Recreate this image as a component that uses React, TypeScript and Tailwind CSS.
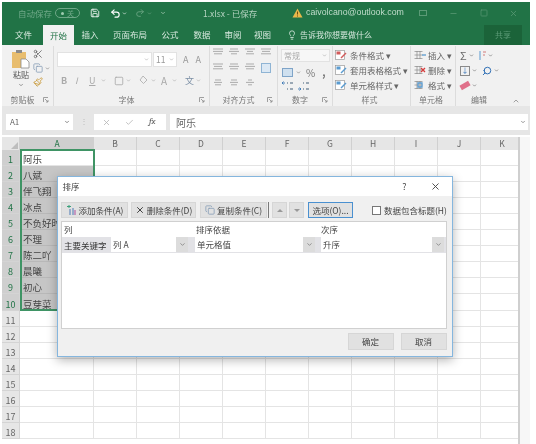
import { ChevronDown, ChevronUp, Check, Lightbulb, Minus, Paintbrush, Scissors, Search, Square, Undo2, Redo2, X, Save, Copy } from 'lucide-react';

const FONT = { fontFamily: '"Noto Sans CJK SC", "Liberation Sans", sans-serif' };

const tabs = [
  { label: '插入', w: 'w-[32px]' },
  { label: '页面布局', w: 'w-[48px]' },
  { label: '公式', w: 'w-[32px]' },
  { label: '数据', w: 'w-[32px]' },
  { label: '审阅', w: 'w-[30px]' },
  { label: '视图', w: 'w-[29px]' },
];

const names = ['阿乐', '八斌', '伴飞翔', '冰点', '不负好时', '不理', '陈二吖', '晨曦', '初心', '豆芽菜'];
const cols = ['B', 'C', 'D', 'E', 'F', 'G', 'H', 'I', 'J', 'K'];
const rows = Array.from({ length: 18 }, (_, i) => i + 1);

function Launcher() {
  return (
    <svg width="6" height="6" viewBox="0 0 6 6" className="shrink-0">
      <path d="M0.5 5V0.5H5M2 2l3 3M5 3v2H3" fill="none" stroke="#8a8a8a" strokeWidth="0.8" />
    </svg>
  );
}

function Group({ w, label, launcher, children }: { w: string; label: string; launcher?: boolean; children: React.ReactNode }) {
  return (
    <div className={`${w} flex shrink-0 flex-col border-r border-[#dcdcdc]`}>
      <div className="h-[49px] overflow-hidden">{children}</div>
      <div className="flex h-[10px] items-center pr-1 text-[8px] leading-none text-[#777]">
        <span className="flex-1 text-center">{label}</span>
        {launcher && <Launcher />}
      </div>
    </div>
  );
}

function Lines({ rows: r }: { rows: number[] }) {
  return (
    <svg width="10" height="9" viewBox="0 0 10 9">
      {r.map((x, i) => (
        <path key={i} d={`M${x} ${1 + i * 2.4}h${10 - x * 2}`} stroke="#a4a4a4" strokeWidth="0.9" />
      ))}
    </svg>
  );
}

function Decimals({ flip }: { flip?: boolean }) {
  return (
    <svg width="12" height="11" viewBox="0 0 12 11">
      <path d="M5 2h1M8 2h3M5 8h1M8 8h3" stroke="#7c8ea0" strokeWidth="1.6" />
      <path d={flip ? 'M0 8h3M1.5 6.5L3 8 1.5 9.5' : 'M3 2H0M1.5 0.5L0 2l1.5 1.5'} fill="none" stroke="#3c78b5" strokeWidth="0.9" />
    </svg>
  );
}

function StyleRow({ color, text }: { color: string; text: string }) {
  return (
    <div className="flex h-[15px] items-center gap-[3px] text-[8.5px] text-[#666]">
      <svg width="12" height="11" viewBox="0 0 12 11">
        <rect x="0.5" y="0.5" width="9" height="9" fill="#fff" stroke="#9a9a9a" strokeWidth="0.7" />
        <rect x="1.5" y="1.5" width="4" height="3" fill={color} />
        <path d="M6 8l5-5" stroke={color} strokeWidth="1.4" />
      </svg>
      <span className="whitespace-nowrap">{text}</span>
    </div>
  );
}

function CellRow({ color, text, mark }: { color: string; text: string; mark: string }) {
  return (
    <div className="flex h-[15px] items-center gap-[2px] text-[8.5px] text-[#666]">
      <svg width="12" height="11" viewBox="0 0 12 11">
        <path d="M0.5 1.5h8M0.5 5h8M0.5 8.5h8M3 1v8M6 1v8" stroke="#8a8a8a" strokeWidth="0.7" />
        <path d={mark} stroke={color} strokeWidth="1.3" fill="none" />
      </svg>
      <span className="whitespace-nowrap">{text}</span>
    </div>
  );
}

function Ribbon() {
  return (
    <div className="flex h-[61px] shrink-0 bg-[#f1f1f1] pt-[1px]">
      <Group w="w-[52px]" label="剪贴板" launcher>
        <div className="flex pl-[9px] pt-[3px]">
          <div className="flex w-[20px] flex-col items-center">
            <svg width="20" height="20" viewBox="0 0 20 20">
              <rect x="1" y="3" width="14" height="16" fill="#e8bd6e" />
              <rect x="5" y="1" width="6" height="3" fill="#8a8a8a" />
              <path d="M10 10h5l3 3v6h-8z" fill="#fff" stroke="#8a8a8a" strokeWidth="0.8" />
            </svg>
            <span className="text-[8px] leading-[11px] text-[#555]">粘贴</span>
            <ChevronDown size={6} strokeWidth={3} className="mt-[2px] text-[#777]" />
          </div>
          <div className="ml-[2px] flex flex-col gap-[4px]">
            <Scissors size={10} className="text-[#6a6a6a]" />
            <div className="flex items-center gap-[2px]">
              <Copy size={10} className="text-[#8aa0b8]" />
              <ChevronDown size={5} strokeWidth={3} className="text-[#777]" />
            </div>
            <Paintbrush size={10} className="text-[#c99a3a]" />
          </div>
        </div>
      </Group>

      <Group w="w-[156px]" label="字体" launcher>
        <div className="flex items-center gap-[1px] pl-[3px] pt-[6px]">
          <div className="flex h-[15px] w-[95px] items-center justify-end border border-[#e2e2e2] bg-white pr-[2px]">
            <ChevronDown size={5} strokeWidth={3} className="text-[#aaa]" />
          </div>
          <div className="flex h-[15px] w-[24px] items-center justify-between border border-[#e2e2e2] bg-white px-[2px] text-[8.5px] text-[#999]">
            11
            <ChevronDown size={5} strokeWidth={3} className="text-[#aaa]" />
          </div>
          <span className="ml-[5px] text-[9px] text-[#999]">A</span>
          <span className="ml-[6px] text-[9px] text-[#999]">A</span>
        </div>
        <div className="flex items-center pl-[7px] pt-[6px] text-[9px] text-[#aaa]">
          <span className="w-[14px] font-bold">B</span>
          <span className="w-[14px] italic">I</span>
          <span className="w-[12px] underline">U</span>
          <ChevronDown size={5} strokeWidth={3} className="mr-[8px]" />
          <Square size={10} />
          <ChevronDown size={5} strokeWidth={3} className="ml-[2px] mr-[7px]" />
          <svg width="11" height="11" viewBox="0 0 11 11">
            <path d="M5 1l4 4-3.5 3.5L2 5z" fill="none" stroke="#aaa" strokeWidth="0.8" />
          </svg>
          <ChevronDown size={5} strokeWidth={3} className="ml-[2px] mr-[5px]" />
          <span className="w-[9px] text-[10px]">A</span>
          <ChevronDown size={5} strokeWidth={3} className="ml-[2px] mr-[8px]" />
          <span className="text-[9px] text-[#7b8fa5]">文</span>
          <ChevronDown size={5} strokeWidth={3} className="ml-[2px]" />
        </div>
      </Group>

      <Group w="w-[68px]" label="对齐方式" launcher>
        <div className="grid grid-cols-4 gap-y-[6px] pl-[3px] pt-[2px]">
          <Lines rows={[0, 0, 1]} />
          <Lines rows={[1, 0, 2]} />
          <Lines rows={[0, 2, 1]} />
          <Lines rows={[0, 1, 0]} />
          <Lines rows={[0, 1, 0]} />
          <Lines rows={[1, 0, 1]} />
          <Lines rows={[1, 0, 1]} />
          <div className="h-[10px] w-[10px] border border-[#8fb4d4] bg-[#dbe8f4]" />
          <Lines rows={[2, 1, 2]} />
          <Lines rows={[2, 1, 2]} />
          <Lines rows={[3, 1, 3]} />
        </div>
      </Group>

      <Group w="w-[55px]" label="数字" launcher>
        <div className="pl-[3px] pt-[3px]">
          <div className="flex h-[13px] w-[49px] items-center justify-between border border-[#e2e2e2] bg-[#f7f7f7] px-[2px] text-[8px] text-[#aaa]">
            常规
            <ChevronDown size={5} strokeWidth={3} />
          </div>
          <div className="flex h-[17px] items-center gap-[3px] pl-[1px] pt-[3px] text-[10px] text-[#777]">
            <div className="h-[9px] w-[11px] border border-[#7fa4c8] bg-[#cfe0ef]" />
            <ChevronDown size={5} strokeWidth={3} />
            <span className="ml-[2px]">%</span>
            <span className="ml-[4px] font-bold leading-[6px]">,</span>
          </div>
          <div className="flex items-center gap-[4px] pl-[1px] pt-[2px]">
            <Decimals />
            <Decimals flip />
          </div>
        </div>
      </Group>

      <Group w="w-[78px]" label="样式">
        <div className="pl-[2px] pt-[2px]">
          <StyleRow color="#d25b5b" text="条件格式 ▾" />
          <StyleRow color="#5a9bd0" text="套用表格格式 ▾" />
          <StyleRow color="#5a9bd0" text="单元格样式 ▾" />
        </div>
      </Group>

      <Group w="w-[45px]" label="单元格">
        <div className="pl-[3px] pt-[2px]">
          <CellRow color="#5a9bd0" text="插入 ▾" mark="M8 5h4" />
          <CellRow color="#d63b3b" text="删除 ▾" mark="M7 3l4 4M11 3l-4 4" />
          <CellRow color="#5a9bd0" text="格式 ▾" mark="M4 3h4v4H4z" />
        </div>
      </Group>

      <div className="flex w-[46px] shrink-0 flex-col">
        <div className="h-[49px] pl-[4px] pt-[2px] text-[#6a6a6a]">
          <div className="flex h-[15px] items-center gap-[2px]">
            <span className="text-[11px] leading-none">Σ</span>
            <ChevronDown size={5} strokeWidth={3} />
            <svg width="8" height="11" viewBox="0 0 8 11" className="ml-[2px]">
              <path d="M2 1v9" stroke="#5a9bd0" strokeWidth="1" />
              <path d="M5 2h3M5 5h2" stroke="#d27a7a" strokeWidth="1" />
            </svg>
            <ChevronDown size={5} strokeWidth={3} />
          </div>
          <div className="flex h-[15px] items-center gap-[2px]">
            <div className="flex h-[10px] w-[10px] items-center justify-center border border-[#8a8a8a] text-[7px] leading-none text-[#2f6fb5]">↓</div>
            <ChevronDown size={5} strokeWidth={3} />
            <Search size={10} strokeWidth={2.4} className="ml-[3px] scale-x-[-1] text-[#2f6fb5]" />
            <ChevronDown size={5} strokeWidth={3} />
          </div>
          <div className="flex h-[15px] items-center gap-[2px]">
            <div className="h-[5px] w-[10px] -rotate-[30deg] bg-[#e0708a]" />
            <ChevronDown size={5} strokeWidth={3} />
          </div>
        </div>
        <div className="text-center text-[8px] leading-[10px] text-[#777]">编辑</div>
      </div>

      <div className="flex flex-1 items-end justify-center pb-[1px]">
        <ChevronUp size={8} className="text-[#777]" />
      </div>
    </div>
  );
}

function FormulaBar() {
  return (
    <div className="flex h-[29px] shrink-0 items-start bg-[#e6e6e6] pl-[4px] pr-[2px] pt-[8px] text-[#666]">
      <div className="flex h-[16px] w-[67px] items-center justify-between bg-white pl-[4px] pr-[3px] text-[8px]">
        A1
        <ChevronDown size={6} strokeWidth={3} />
      </div>
      <div className="w-[21px] text-center text-[8px] leading-[14px] text-[#bbb]">⋮</div>
      <div className="flex h-[16px] w-[72px] items-center bg-white pl-[8px]">
        <X size={9} className="text-[#b0b0b0]" />
        <Check size={9} className="ml-[14px] text-[#b0b0b0]" />
        <span className="ml-[15px] font-serif text-[9px] italic text-[#555]">fx</span>
      </div>
      <div className="ml-[4px] flex h-[16px] flex-1 items-center justify-between bg-white pl-[6px] pr-[2px] text-[10px]">
        阿乐
        <ChevronDown size={6} strokeWidth={3} className="text-[#777]" />
      </div>
    </div>
  );
}

function Sheet() {
  return (
    <div className="relative flex min-h-0 flex-1 overflow-hidden bg-white pt-[2px]">
      <div className="min-w-0 flex-1 overflow-hidden">
        <div className="flex h-[12.6px] bg-[#e6e6e6] text-[8.5px] leading-[13px] text-[#666]">
          <div className="flex w-[18px] shrink-0 items-end justify-end border-r border-[#d0d0d0] pb-[1px] pr-[1px]">
            <div className="h-0 w-0 border-b-[7px] border-l-[7px] border-b-[#bdbdbd] border-l-transparent" />
          </div>
          <div className="w-[74px] shrink-0 bg-[#cfcfcf] text-center text-[#217346]">A</div>
          {cols.map((c) => (
            <div key={c} className="w-[43px] shrink-0 border-r border-[#d0d0d0] text-center">{c}</div>
          ))}
        </div>
        {rows.map((r) => (
          <div key={r} className="flex h-[16.1px]">
            <div className={`flex w-[18px] shrink-0 items-end justify-center border-r border-b border-[#d4d4d4] text-[9px] leading-[11px] ${r <= 10 ? 'bg-[#cfcfcf] text-[#217346]' : 'bg-[#e6e6e6] text-[#666]'}`}>
              {r}
            </div>
            <div className={`flex w-[74px] shrink-0 items-end overflow-hidden whitespace-nowrap border-b border-r pl-[3px] text-[9.5px] leading-[12px] text-[#444] ${r === 1 ? 'border-[#e4e4e4] bg-white' : r <= 10 ? 'border-[#b8b8b8] bg-[#c6c6c6]' : 'border-[#e4e4e4] bg-white'}`}>
              {names[r - 1]}
            </div>
            {cols.map((c) => (
              <div key={c} className="w-[43px] shrink-0 border-r border-b border-[#e4e4e4]" />
            ))}
          </div>
        ))}
      </div>
      <div className="w-[12px] shrink-0 border-l-2 border-[#cfcfcf] bg-[#f7f7f7]" />
      <div className="pointer-events-none absolute left-[18px] top-[14px] h-[161.5px] w-[75px] border-2 border-[#3f9465]" />
    </div>
  );
}

function DialogButton({ children, className = 'border-[#d6d6d6]' }: { children: React.ReactNode; className?: string }) {
  return (
    <div className={`flex h-[16px] shrink-0 items-center justify-center gap-[2px] border bg-[#e1e1e1] text-[8.5px] whitespace-nowrap text-[#444] ${className}`}>
      {children}
    </div>
  );
}

function SortSelect({ w, text }: { w: string; text: string }) {
  return (
    <div className={`${w} flex h-[15px] shrink-0 items-center justify-between bg-white pl-[2px] text-[8.5px] text-[#444]`}>
      <span>{text}</span>
      <div className="flex h-[15px] w-[12px] items-center justify-center bg-[#dcdcdc]">
        <ChevronDown size={7} strokeWidth={2.5} className="text-[#777]" />
      </div>
    </div>
  );
}

function SortDialog() {
  return (
    <div className="absolute left-[57px] top-[176px] flex h-[181px] w-[395.5px] flex-col border-[1.5px] border-[#85b6de] bg-[#f0f0f0] shadow-[0_3px_10px_rgba(0,0,0,0.3)]">
      <div className="flex h-[19px] shrink-0 items-center justify-between bg-white pl-[4.5px] pr-[11px] text-[8.5px] text-[#444]">
        <span>排序</span>
        <div className="flex items-center gap-[23px]">
          <span className="text-[9px]">?</span>
          <X size={11} className="text-[#444]" />
        </div>
      </div>
      <div className="flex items-center px-[3px] pt-[6px]">
        <DialogButton className="w-[67px] border-[#d6d6d6]">
          <svg width="11" height="11" viewBox="0 0 11 11">
            <path d="M1 1.5h4M3 0v3" stroke="#3aa07a" strokeWidth="1" />
            <path d="M4 4v6M7 3v7" stroke="#4a78b5" strokeWidth="1" />
            <path d="M9 5v5" stroke="#b565a8" strokeWidth="1.2" />
          </svg>
          添加条件(A)
        </DialogButton>
        <DialogButton className="ml-[3px] w-[65px] border-[#d6d6d6]">
          <X size={10} strokeWidth={2.4} className="text-[#444]" />
          删除条件(D)
        </DialogButton>
        <DialogButton className="ml-[4px] w-[67px] border-[#d6d6d6]">
          <Copy size={10} className="text-[#8aa0b8]" />
          复制条件(C)
        </DialogButton>
        <div className="ml-[1px] h-[16px] w-[1px] bg-[#7a7a7a]" />
        <DialogButton className="ml-[3px] w-[15px] border-[#d6d6d6]">
          <span className="h-0 w-0 border-x-[3px] border-b-[3px] border-x-transparent border-b-[#999]" />
        </DialogButton>
        <DialogButton className="ml-[2px] w-[15px] border-[#d6d6d6]">
          <span className="h-0 w-0 border-x-[3px] border-t-[3px] border-x-transparent border-t-[#999]" />
        </DialogButton>
        <DialogButton className="ml-[4px] w-[45px] border-[1.5px] border-[#4a90d0]">选项(O)...</DialogButton>
        <div className="ml-[19px] h-[9px] w-[9px] border border-[#777] bg-white" />
        <span className="ml-[3px] whitespace-nowrap text-[8.5px] text-[#444]">数据包含标题(H)</span>
      </div>
      <div className="ml-[3px] mr-[5px] mt-[3px] h-[108px] border-[1.5px] border-[#d0d0d0] bg-white text-[8.5px] text-[#444]">
        <div className="flex h-[15px] items-center">
          <span className="w-[134px] pl-[2px]">列</span>
          <span className="w-[125px]">排序依据</span>
          <span>次序</span>
        </div>
        <div className="flex h-[16px] bg-[#e2e2e6]">
          <span className="flex w-[49px] shrink-0 items-center pl-[2px] text-[#333]">主要关键字</span>
          <SortSelect w="w-[77px]" text="列 A" />
          <div className="w-[7px] shrink-0" />
          <SortSelect w="w-[120px]" text="单元格值" />
          <div className="w-[6px] shrink-0" />
          <SortSelect w="w-[123px]" text="升序" />
        </div>
      </div>
      <div className="flex justify-end gap-[7px] pr-[5px] pt-[4px]">
        <DialogButton className="h-[17px] w-[46px] border-[#d6d6d6]">确定</DialogButton>
        <DialogButton className="h-[17px] w-[46px] border-[#d6d6d6]">取消</DialogButton>
      </div>
    </div>
  );
}

export default function App() {
  return (
    <div className="relative flex h-[444px] w-[536px] flex-col overflow-hidden bg-white pl-[2px] pr-[6px] pt-[2px] blur-[0.5px]" style={FONT}>
      <div className="flex h-[22px] shrink-0 items-center bg-[#217346] text-[8.5px] text-[#6fa888]">
        <span className="ml-[16px] w-[32px] whitespace-nowrap">自动保存</span>
        <div className="ml-[5px] flex h-[10px] w-[25px] items-center justify-center gap-[3px] rounded-full border border-[#6fa888] text-[7px]">
          <span className="h-[3px] w-[3px] rounded-full bg-[#9fcbb0]" />关
        </div>
        <Save size={10} className="ml-[10px] text-white" />
        <Undo2 size={11} strokeWidth={2.5} className="ml-[10px] text-white" />
        <ChevronDown size={5} strokeWidth={3} className="ml-[1px] text-white" />
        <Redo2 size={10} className="ml-[8px] text-[#6ea785]" />
        <ChevronDown size={5} strokeWidth={3} className="ml-[2px] text-[#6ea785]" />
        <ChevronDown size={6} strokeWidth={3} className="ml-[8px] text-[#a8ccb6]" />
        <span className="ml-[37px] w-[90px] whitespace-nowrap text-[#b5d3c1]">1.xlsx - 已保存</span>
        <svg width="11" height="10" viewBox="0 0 11 10" className="ml-[-1px]">
          <path d="M5.5 0.5L10.5 9.5H0.5z" fill="#e8b84a" />
          <path d="M5.5 3.5v3M5.5 7.5v1" stroke="#6b4a10" strokeWidth="1" />
        </svg>
        <span className="ml-[3px] w-[113px] whitespace-nowrap text-[8.8px] text-[#c0dccb]" style={{ fontFamily: '"Liberation Sans", sans-serif' }}>caivolcano@outlook.com</span>
        <div className="h-[6px] w-[8px] border border-[#5b9a76]" />
        <Minus size={9} className="ml-[22px] text-[#5b9a76]" />
        <Square size={8} className="ml-[22px] text-[#5b9a76]" />
        <X size={9} className="ml-[21px] text-[#5b9a76]" />
      </div>

      <div className="flex h-[21px] shrink-0 items-end bg-[#217346] text-[8.5px] text-[#d7e8de]">
        <span className="ml-[13px] w-[28px] self-center">文件</span>
        <span className="flex h-[20px] w-[31px] items-center justify-center bg-[#f1f1f1] text-[#217346]">开始</span>
        {tabs.map((t) => (
          <span key={t.label} className={`${t.w} self-center text-center whitespace-nowrap`}>{t.label}</span>
        ))}
        <Lightbulb size={10} className="ml-[10px] self-center text-[#d7e8de]" />
        <span className="ml-[3px] w-[184px] self-center whitespace-nowrap text-[8px]">告诉我你想要做什么</span>
        <span className="flex h-[20px] w-[38px] items-center justify-center bg-[#1b6339] text-[8px] text-[#5b9a76]">共享</span>
      </div>

      <Ribbon />
      <FormulaBar />
      <Sheet />
      <SortDialog />
    </div>
  );
}
